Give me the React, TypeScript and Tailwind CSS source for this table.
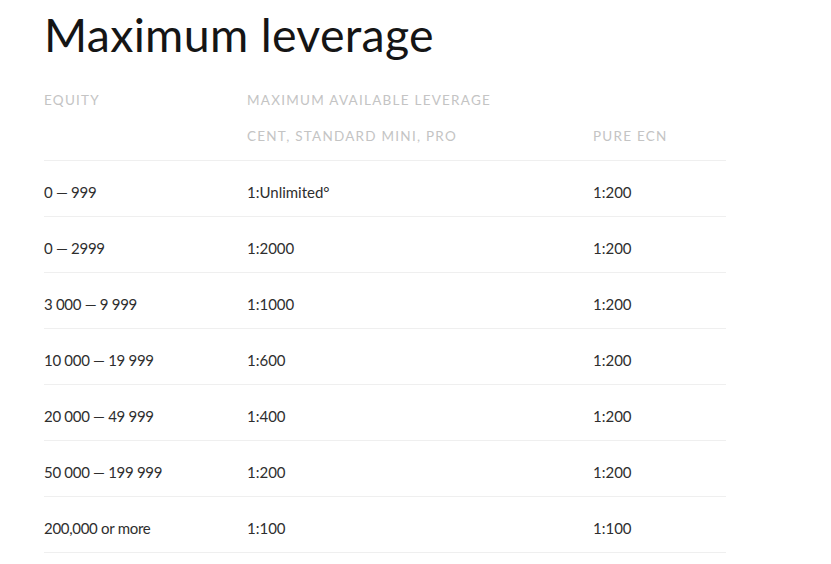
import React from "react";

const rows: [string, string, string][] = [
  ["0 — 999", "1:Unlimited°", "1:200"],
  ["0 — 2999", "1:2000", "1:200"],
  ["3 000 — 9 999", "1:1000", "1:200"],
  ["10 000 — 19 999", "1:600", "1:200"],
  ["20 000 — 49 999", "1:400", "1:200"],
  ["50 000 — 199 999", "1:200", "1:200"],
  ["200,000 or more", "1:100", "1:100"],
];

export default function App() {
  return (
    <div
      className="w-[831px] h-[564px] bg-white overflow-hidden pl-[44px]"
      style={{ fontFamily: "Lato, 'Open Sans', sans-serif" }}
    >
      <h1 className="text-[46.5px] leading-[56px] text-[#151515] pt-[6px] tracking-[0.3px]">
        Maximum leverage
      </h1>
      <div className="w-[682px] mt-[30px]">
        <div className="flex text-[13.5px] uppercase text-[#c4c4c4] tracking-[1.25px] leading-[16px]">
          <div className="w-[203px]">Equity</div>
          <div>Maximum available leverage</div>
        </div>
        <div className="flex text-[13.5px] uppercase text-[#c4c4c4] tracking-[1.25px] leading-[16px] mt-[20px] pb-[16px] border-b border-[#efefef]">
          <div className="w-[203px]"></div>
          <div className="w-[346px]">Cent, standard mini, pro</div>
          <div>Pure ECN</div>
        </div>
        {rows.map((r) => (
          <div
            key={r[0]}
            className="flex h-[56px] items-center pt-[8px] text-[15px] text-[#2e2e2e] border-b border-[#efefef]"
          >
            <div className="w-[203px] tracking-[-0.3px]">{r[0]}</div>
            <div className="w-[346px]">{r[1]}</div>
            <div>{r[2]}</div>
          </div>
        ))}
      </div>
    </div>
  );
}
